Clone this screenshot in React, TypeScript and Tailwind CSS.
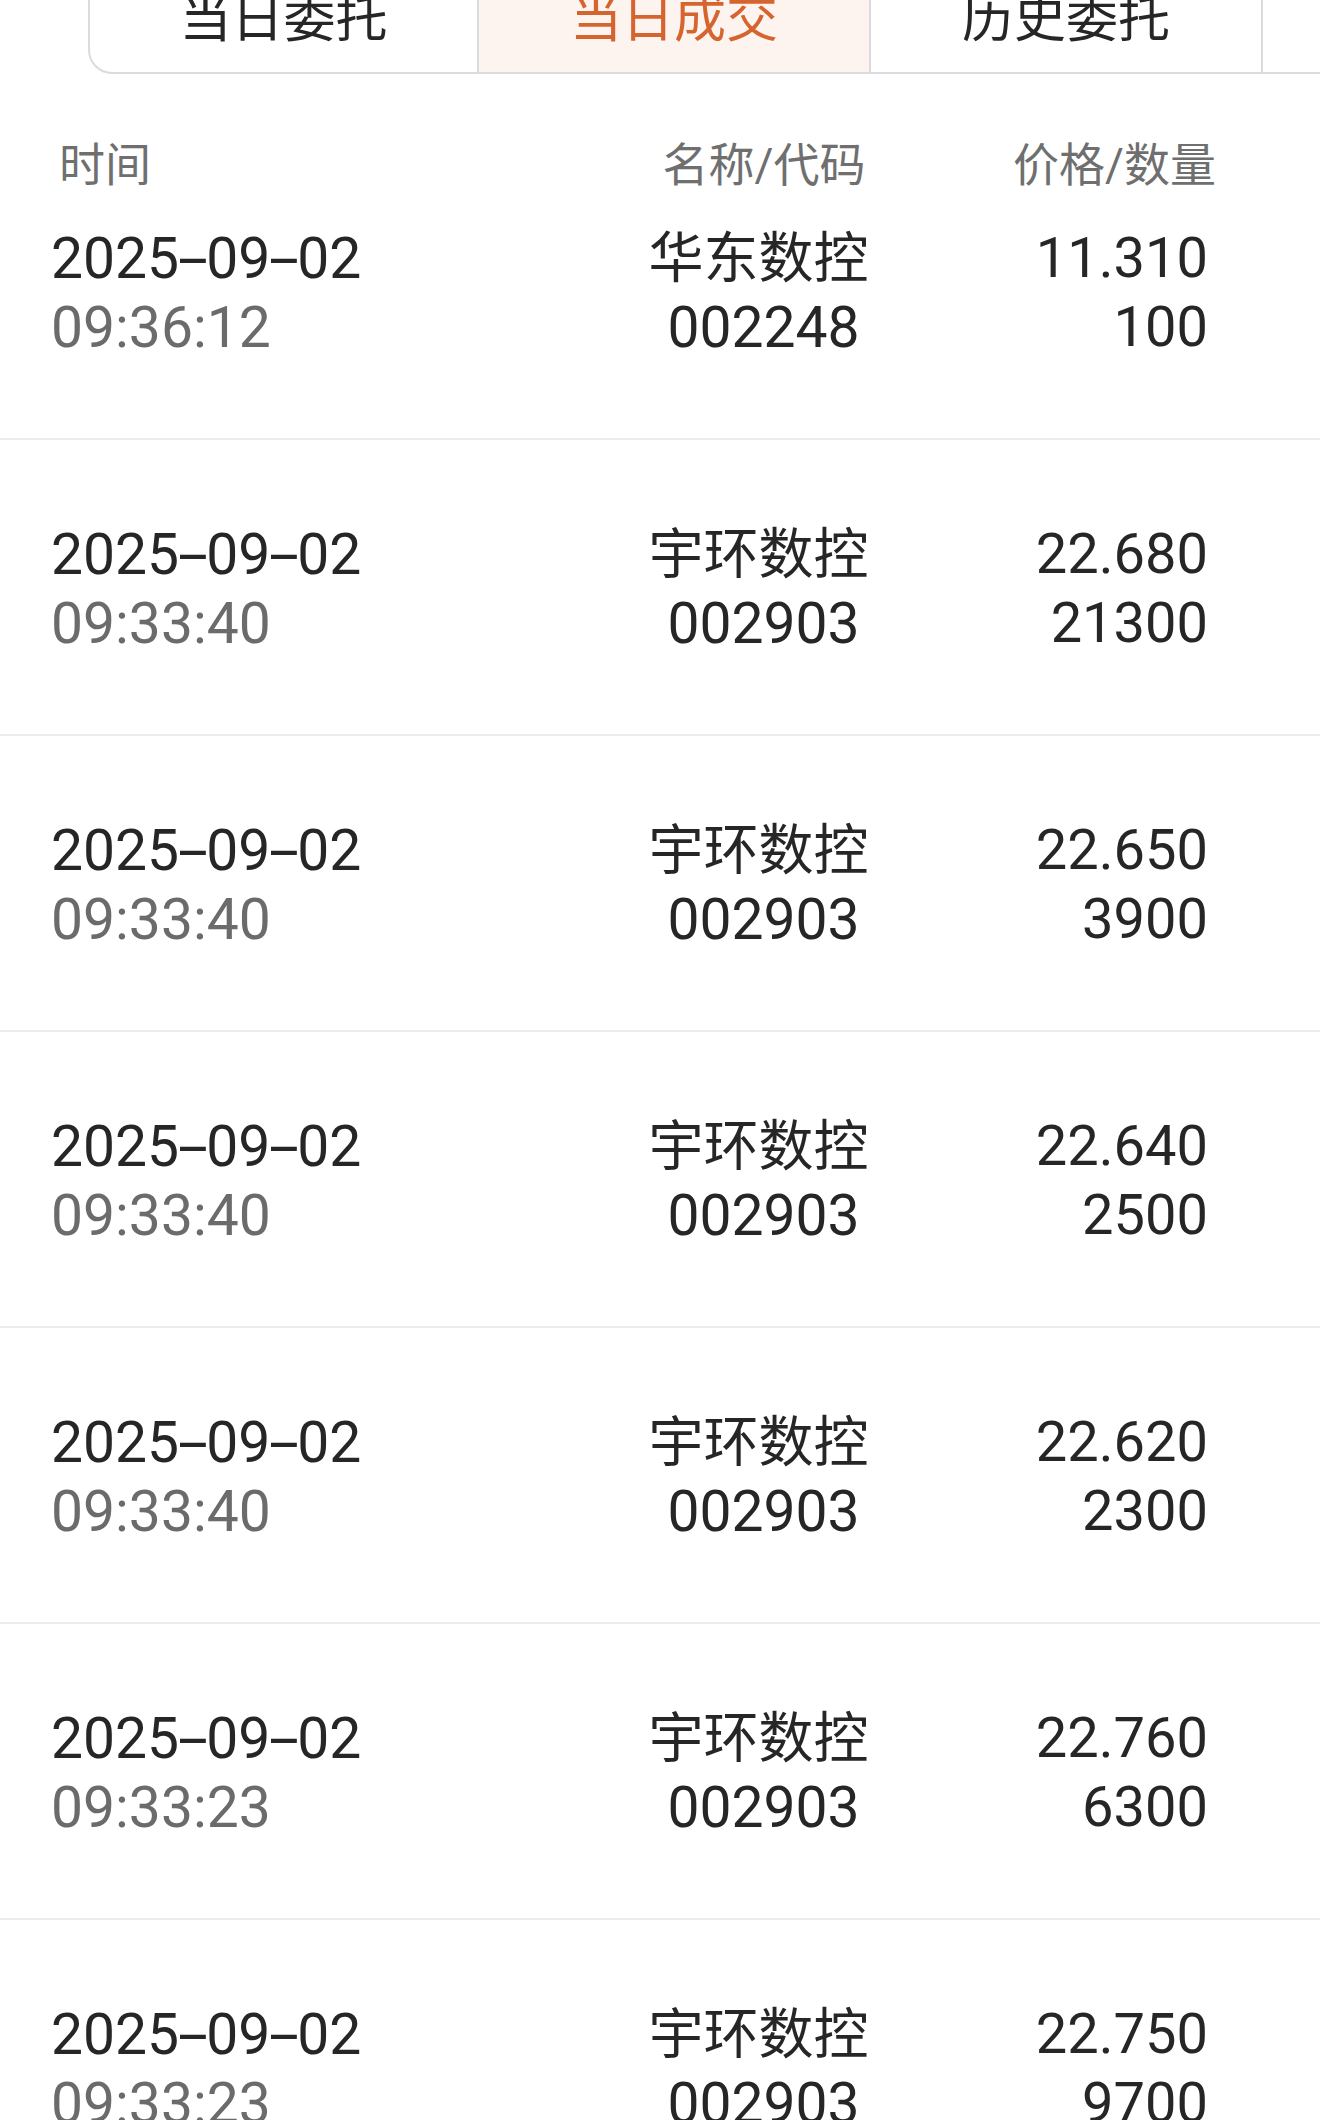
import React from "react"

interface Trade {
  date: string
  time: string
  name: string
  code: string
  price: string
  qty: string
}

const tabs = ["当日委托", "当日成交", "历史委托", "历史成交"]

const trades: Trade[] = [
  { date: "2025-09-02", time: "09:36:12", name: "华东数控", code: "002248", price: "11.310", qty: "100" },
  { date: "2025-09-02", time: "09:33:40", name: "宇环数控", code: "002903", price: "22.680", qty: "21300" },
  { date: "2025-09-02", time: "09:33:40", name: "宇环数控", code: "002903", price: "22.650", qty: "3900" },
  { date: "2025-09-02", time: "09:33:40", name: "宇环数控", code: "002903", price: "22.640", qty: "2500" },
  { date: "2025-09-02", time: "09:33:40", name: "宇环数控", code: "002903", price: "22.620", qty: "2300" },
  { date: "2025-09-02", time: "09:33:23", name: "宇环数控", code: "002903", price: "22.760", qty: "6300" },
  { date: "2025-09-02", time: "09:33:23", name: "宇环数控", code: "002903", price: "22.750", qty: "9700" },
  { date: "2025-09-02", time: "09:33:23", name: "宇环数控", code: "002903", price: "22.740", qty: "1200" }
]

const font = "font-['Roboto','Noto_Sans_CJK_SC',sans-serif]"

// the app's font draws a wider dash than Roboto
const DateText: React.FC<{ value: string }> = ({ value }) => {
  const parts = value.split("-")
  return (
    <>
      {parts.map((p, i) => (
        <React.Fragment key={i}>
          {i > 0 && (
            <span className="inline-block w-[27px] text-center">
              <span className="inline-block scale-x-[1.9]">-</span>
            </span>
          )}
          {p}
        </React.Fragment>
      ))}
    </>
  )
}

const TradeRow: React.FC<{ trade: Trade; first?: boolean }> = ({ trade, first }) => (
  <div
    className={
      "flex border-b-2 border-[#ededf0] pl-[51px] pr-[112px] " +
      (first ? "pt-[29px] pb-[76px]" : "pt-[80px] pb-[76px]")
    }
  >
    <div className="flex-1">
      <div className="text-[57px] leading-[69px] text-[#262626]">
        <DateText value={trade.date} />
      </div>
      <div className="text-[57px] leading-[69px] text-[#6b6b6b]">{trade.time}</div>
    </div>
    <div className="w-[289px] text-center">
      <div className="pr-[10px] text-[55px] leading-[69px] text-[#262626]">{trade.name}</div>
      <div className="text-[57px] leading-[69px] text-[#262626]">{trade.code}</div>
    </div>
    <div className="w-[300px] text-right">
      <div className="text-[56px] leading-[69px] text-[#262626]">{trade.price}</div>
      <div className="text-[56px] leading-[69px] text-[#262626]">{trade.qty}</div>
    </div>
  </div>
)

export default function App() {
  return (
    <div className={"w-[1320px] overflow-hidden bg-white " + font}>
      {/* tab bar, scrolled partly out of view */}
      <div className="-mt-[34px] pl-[88px]">
        <div className="flex h-[108px] w-max rounded-l-[24px] border-2 border-r-0 border-[#dadbde]">
          {tabs.map((tab, i) => (
            <div
              key={tab}
              className={
                "flex shrink-0 items-center justify-center text-[52px] leading-[52px] " +
                (i > 0 ? "w-[392px] border-l-2 border-[#dadbde] " : "w-[387px] ") +
                (i === 1 ? "bg-[#fdf4f0] text-[#d5642e]" : "text-[#262626]")
              }
            >
              {tab}
            </div>
          ))}
        </div>
      </div>

      {/* column header */}
      <div className="flex pl-[59px] pr-[104px] pt-[61px] text-[46px] leading-[60px] text-[#6f6f6f]">
        <div className="flex-1">时间</div>
        <div className="w-[304px] text-center">名称/代码</div>
        <div className="w-[300px] text-right">价格/数量</div>
      </div>

      {trades.map((t, i) => (
        <TradeRow key={i} trade={t} first={i === 0} />
      ))}
    </div>
  )
}
